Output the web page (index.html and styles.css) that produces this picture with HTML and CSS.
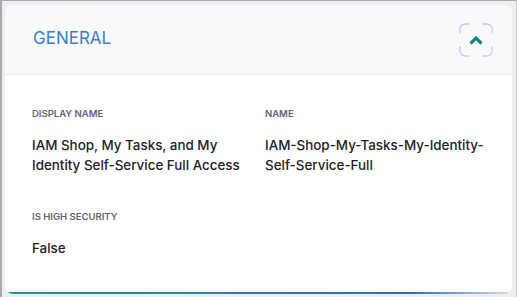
FILE: index.html
```html
<!DOCTYPE html>
<html>
<head>
<meta charset="utf-8">
<link rel="stylesheet" href="styles.css">
</head>
<body>
<div class="frame">
  <div class="card">
    <div class="header">
      <h2 class="title">GENERAL</h2>
      <button class="toggle" aria-label="Collapse">
        <svg width="34" height="34" viewBox="0 0 34 34">
          <defs>
            <linearGradient id="g" x1="0" y1="0" x2="1" y2="1">
              <stop offset="0" stop-color="#c4b8ef"/>
              <stop offset="1" stop-color="#e2c8f0"/>
            </linearGradient>
          </defs>
          <g fill="none" stroke="url(#g)" stroke-width="1.3" stroke-linecap="round">
            <path d="M1 10 V6 A5 5 0 0 1 6 1 H10"/>
            <path d="M24 1 H28 A5 5 0 0 1 33 6 V10"/>
            <path d="M33 24 V28 A5 5 0 0 1 28 33 H24"/>
            <path d="M10 33 H6 A5 5 0 0 1 1 28 V24"/>
          </g>
          <path d="M11.5 20.5 L17 15 L22.5 20.5" fill="none" stroke="#17857f" stroke-width="3.2" stroke-linecap="butt" stroke-linejoin="miter"/>
        </svg>
      </button>
    </div>
    <div class="body">
      <div class="field">
        <div class="label">DISPLAY NAME</div>
        <div class="value">IAM Shop, My Tasks, and My Identity Self-Service Full Access</div>
      </div>
      <div class="field">
        <div class="label">NAME</div>
        <div class="value">IAM-Shop-My-Tasks-My-Identity-Self-Service-Full</div>
      </div>
      <div class="field">
        <div class="label">IS HIGH SECURITY</div>
        <div class="value">False</div>
      </div>
    </div>
  </div>
</div>
</body>
</html>
```

FILE: styles.css
```css
html, body {
  margin: 0;
  padding: 0;
  background: #ffffff;
}

.frame {
  box-sizing: border-box;
  width: 517px;
  height: 297px;
  border-left: 2px solid #a9a9a9;
  border-top: 1px solid #a9a9a9;
  border-right: 1px solid #c9c9c9;
  background: #eceef1;
  padding: 4px 4px 3px 3px;
  display: flex;
  flex-direction: column;
  font-family: Inter, "Noto Sans", sans-serif;
}

.card {
  flex: 1;
  border-radius: 8px;
  overflow: hidden;
  display: flex;
  flex-direction: column;
  background-color: #ffffff;
  background-image: linear-gradient(90deg, #1f9a86, #2f6fb0 80%, #d8dde3);
  background-size: 100% 2px;
  background-repeat: no-repeat;
  background-position: bottom;
  padding-bottom: 2px;
}

.header {
  height: 69px;
  background: #f9f9fc;
  border-bottom: 1px solid #e7e8ec;
  border-radius: 8px 8px 0 0;
  display: flex;
  align-items: center;
  justify-content: space-between;
  padding: 0 19px 0 28px;
}

.title {
  margin: 0 0 3px 0;
  font-size: 17px;
  font-weight: 400;
  color: #3b7fc4;
}

.toggle {
  border: 0;
  padding: 0;
  margin: 0;
  background: transparent;
  width: 34px;
  height: 34px;
  display: block;
}

.toggle svg {
  display: block;
}

.body {
  flex: 1;
  border-radius: 0 0 8px 8px;
  background: #ffffff;
  display: grid;
  grid-template-columns: 233px 1fr;
  row-gap: 36px;
  padding: 33px 8px 0 27px;
  align-content: start;
}

.label {
  font-size: 9.5px;
  font-weight: 600;
  color: #5e6470;
  line-height: 12px;
}

.value {
  margin-top: 15px;
  font-size: 13.4px;
  font-weight: 500;
  color: #1d2127;
  line-height: 20px;
  padding-right: 4px;
}
```
